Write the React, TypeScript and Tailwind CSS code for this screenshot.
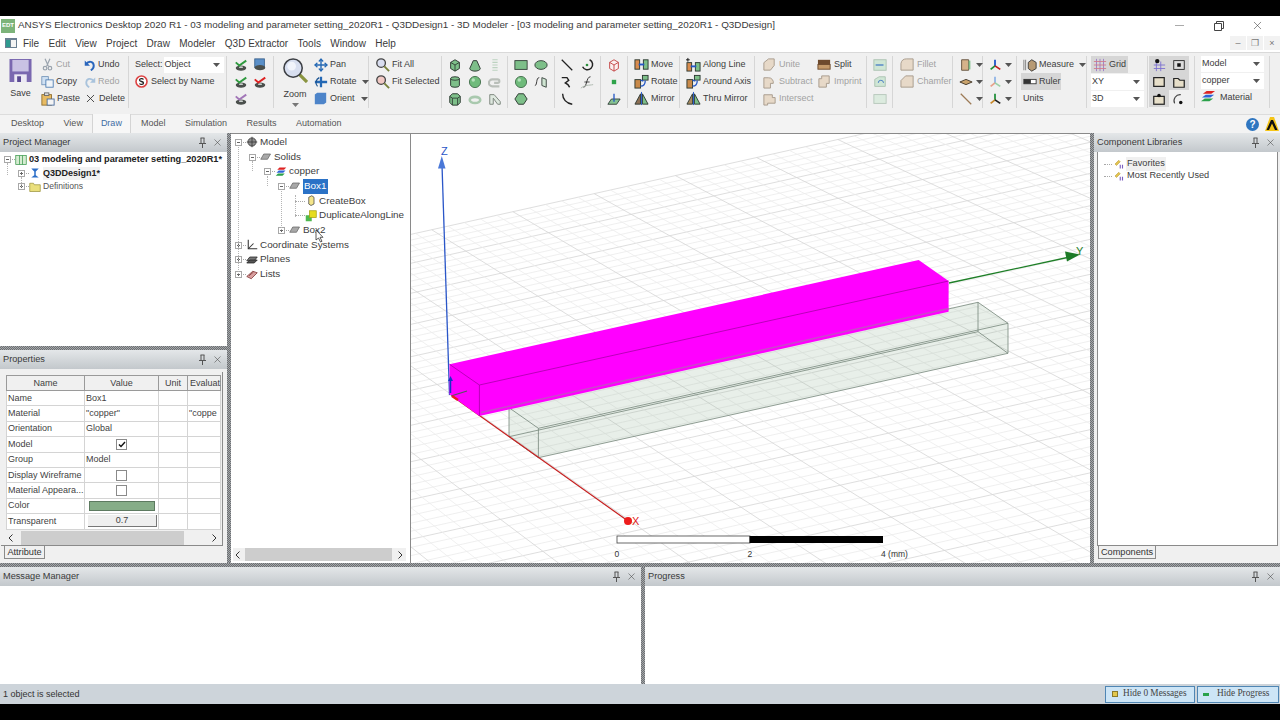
import React from 'react';
import { X, Move } from 'lucide-react';

const ink = '#2e3a33';

function Ic({ size = 14, children }: { size?: number; children?: React.ReactNode }) {
  return (
    <svg width={size} height={size} viewBox="0 0 16 16" fill="none" className="shrink-0">
      {children}
    </svg>
  );
}

function Caret({ color = '#555' }: { color?: string }) {
  return (
    <svg width="7" height="4" viewBox="0 0 7 4" className="shrink-0">
      <path d="M0 0h7L3.5 4z" fill={color} />
    </svg>
  );
}

function Pin() {
  return (
    <svg width="9" height="11" viewBox="0 0 9 11" fill="none" stroke="#555" strokeWidth="1">
      <path d="M1 6.5h7M2.5 1h4M3 1v5.5M6 1v5.5M4.5 6.5V11" />
    </svg>
  );
}

function PanelHeader({ title }: { title: string }) {
  return (
    <div className="h-[19px] shrink-0 flex items-center justify-between pl-[3px] pr-[4.500px] bg-gradient-to-b from-[#e4e7e9] to-[#c3c8cc] text-[9.2px] text-[#3a3a3a]">
      <span>{title}</span>
      <span className="flex items-center gap-[5px]">
        <Pin />
        <X size={11} strokeWidth={1.2} color="#444" />
      </span>
    </div>
  );
}

function Row({ icon, label, off, caret, className = '' }: { icon?: React.ReactNode; label: string; off?: boolean; caret?: boolean; className?: string }) {
  return (
    <div className={`h-[17px] flex items-center gap-[2px] whitespace-nowrap text-[9px] ${off ? 'text-[#a2a2a2]' : 'text-[#3c3c3c]'} ${className}`}>
      {icon}
      <span>{label}</span>
      {caret && <span className="ml-[3px]"><Caret /></span>}
    </div>
  );
}

function Col({ children, className = '' }: { children?: React.ReactNode; className?: string }) {
  return <div className={`flex flex-col shrink-0 ${className}`}>{children}</div>;
}

function Cell({ children, caret }: { children?: React.ReactNode; caret?: boolean }) {
  return (
    <div className="h-[17px] flex items-center justify-center gap-[3px]">
      {children}
      {caret && <Caret />}
    </div>
  );
}

function Combo({ label, className = '' }: { label: string; className?: string }) {
  return (
    <div className={`h-[16px] bg-white flex items-center justify-between pl-[1px] pr-[4px] text-[9px] text-[#3c3c3c] ${className}`}>
      <span>{label}</span>
      <Caret />
    </div>
  );
}

// ---- ribbon drawings
const Mark = ({ tint }: { tint: string }) => (
  <Ic>
    <ellipse cx="8" cy="11.5" rx="6" ry="3" fill="#4a4f4c" />
    <ellipse cx="8" cy="10.5" rx="2.4" ry="1" fill="#c9cfcb" />
    <path d="M2 5l4 3.5L14 3" stroke={tint} strokeWidth="2.2" />
  </Ic>
);
const Solid = ({ d, extra, pale }: { d: string; extra?: string; pale?: boolean }) => (
  <Ic>
    <path d={d} fill={pale ? '#dfe9e0' : '#7dbf89'} stroke={pale ? '#7d867e' : ink} strokeWidth="1.1" />
    {extra && <path d={extra} stroke={pale ? '#a9b5aa' : ink} strokeWidth="1" />}
  </Ic>
);
const Ball = () => (
  <Ic>
    <circle cx="8" cy="8" r="6.4" fill="#6fbb7b" stroke="#3f6b48" />
    <circle cx="6" cy="5.8" r="2" fill="#b4e0ba" />
  </Ic>
);
const Xf = ({ tint = '#c98a4a', arrow = '#2457c5' }: { tint?: string; arrow?: string }) => (
  <Ic size={15}>
    <rect x="1" y="6" width="6" height="9" fill={tint} stroke={ink} />
    <rect x="9" y="1.5" width="6" height="5" fill="#7dbf89" stroke={ink} />
    <path d="M7 6.5l3 1" stroke={arrow} strokeWidth="1.6" />
    <path d="M12 7c0 4-2 6-5 6" stroke={arrow} strokeWidth="1.4" />
  </Ic>
);
const Tri = ({ tint = '#8d6f54' }: { tint?: string }) => (
  <Ic size={15}>
    <path d="M7 3L1 14h6z" fill={tint} stroke={ink} />
    <path d="M9 3l6 11H9z" fill="#7dbf89" stroke={ink} />
    <path d="M8 1v14" stroke="#2457c5" />
  </Ic>
);
const Bool = ({ d }: { d: string }) => (
  <Ic size={15}>
    <path d={d} fill="#e7d9c8" stroke="#a89b8c" />
  </Ic>
);
const Lens = ({ tint }: { tint: string }) => (
  <Ic size={15}>
    <circle cx="6.5" cy="6.5" r="4.6" fill={tint} stroke="#444" strokeWidth="1.4" />
    <path d="M10 10l5 5" stroke="#77803a" strokeWidth="2" />
  </Ic>
);
const Axes = ({ a = '#1f8f3a', b = '#1a50c8', c = '#c02020' }: { a?: string; b?: string; c?: string }) => (
  <Ic>
    <path d="M8 2v8" stroke={b} strokeWidth="2" />
    <path d="M8 9l-5 4" stroke={a} strokeWidth="2" />
    <path d="M8 9l6 4" stroke={c} strokeWidth="2" />
  </Ic>
);

function Ribbon() {
  const g = 'flex shrink-0 border-r border-[#d6d6d6] h-[52px]';
  return (
    <div className="h-[62px] shrink-0 flex pt-[3px] bg-[#f0f0f0] border-t border-[#d9d9d9]">
      {/* clipboard */}
      <div className={`${g} w-[129px]`}>
        <Col className="w-[41px] items-center pt-[3px]">
          <svg width="23" height="23" viewBox="0 0 23 24">
            <path d="M0 0h23v24H0z" fill="#7a68b0" />
            <path d="M3 1h17v12H3z" fill="#c9c2e4" />
            <path d="M5 16h13v8H5z" fill="#ece9f4" />
            <path d="M8 18h4v6H8z" fill="#5b4a94" />
          </svg>
          <span className="text-[9px] text-[#3c3c3c] mt-[5px]">Save</span>
        </Col>
        <Col className="w-[43px]">
          <Row off label="Cut" icon={<Ic size={13}><path d="M5 1l4 9M11 1L7 10" stroke="#9aa3ad" strokeWidth="1.5" /><circle cx="5" cy="12.5" r="2.2" stroke="#9aa3ad" strokeWidth="1.5" /><circle cx="11" cy="12.5" r="2.2" stroke="#9aa3ad" strokeWidth="1.5" /></Ic>} />
          <Row label="Copy" icon={<Ic size={13}><rect x="1" y="2" width="8" height="10" fill="#cfe0f2" stroke="#6d8fb5" /><rect x="6" y="6" width="9" height="9" fill="#f0f4f8" stroke="#3f73ad" /></Ic>} />
          <Row label="Paste" icon={<Ic size={14}><rect x="1" y="3" width="11" height="12" fill="#e8bb62" stroke="#8e6c2c" /><rect x="4" y="1" width="5" height="3" fill="#ddd" stroke="#666" /><rect x="7" y="8" width="8" height="7" fill="#f4f4f4" stroke="#46699a" /></Ic>} />
        </Col>
        <Col>
          <Row label="Undo" icon={<Ic size={12}><path d="M3 7c3-5 10-4 10 2 0 3-2 5-4 6" stroke="#2a66bd" strokeWidth="2.6" /><path d="M1 2v7h7z" fill="#2a66bd" /></Ic>} />
          <Row off label="Redo" icon={<Ic size={12}><path d="M13 7C10 2 3 3 3 9c0 3 2 5 4 6" stroke="#a9c3dc" strokeWidth="2.4" /><path d="M15 2v7H8z" fill="#a9c3dc" /></Ic>} />
          <Row label="Delete" className="gap-[1px]" icon={<X size={13} strokeWidth={1.6} color="#333" className="shrink-0" />} />
        </Col>
      </div>
      {/* select */}
      <div className={`${g} w-[98px] pl-[6px]`}>
        <Col>
          <div className="h-[17px] flex items-center gap-[1px] text-[9px] text-[#3c3c3c]">
            <span>Select:</span>
            <Combo label="Object" className="w-[60px]" />
          </div>
          <Row label="Select by Name" className="gap-[3px]" icon={<svg width="13" height="13" viewBox="0 0 13 13"><circle cx="6.5" cy="6.5" r="5.5" fill="#fff" stroke="#d44" strokeWidth="1.6" /><path d="M8.5 4.5C7.5 3 4.5 3.4 4.5 5c0 2 4 1 4 3 0 1.600-3 2-4 .5" fill="none" stroke="#222" strokeWidth="1.3" /></svg>} />
        </Col>
      </div>
      {/* selection filters */}
      <div className={`${g} w-[47px] pl-[3px]`}>
        <Col className="w-[20px] ml-[1px]">
          <Cell><Mark tint="#2f9a3f" /></Cell>
          <Cell><Mark tint="#2f9a3f" /></Cell>
          <Cell><Mark tint="#a277b8" /></Cell>
        </Col>
        <Col className="w-[18px]">
          <Cell><Ic><rect x="2" y="1" width="11" height="10" fill="#5a8fc8" stroke="#39618d" /><ellipse cx="8" cy="11" rx="6" ry="3" fill="#4a4f4c" /></Ic></Cell>
          <Cell><Mark tint="#d22" /></Cell>
        </Col>
      </div>
      {/* view */}
      <div className={`${g} w-[95px]`}>
        <Col className="w-[40px] items-center pl-[2px]">
          <svg width="25" height="25" viewBox="0 0 26 26" className="mt-[2px]">
            <path d="M16 16l9 9" stroke="#8a9440" strokeWidth="3.4" />
            <circle cx="10.500" cy="10.500" r="9.500" fill="#d8dff0" stroke="#3c3f44" strokeWidth="1.6" />
            <circle cx="9" cy="8.500" r="4.500" fill="#f1f4fb" />
          </svg>
          <span className="text-[9px] text-[#3c3c3c] mt-[5px] leading-[12px]">Zoom</span>
          <span className="mt-[3px]"><Caret color="#777" /></span>
        </Col>
        <Col>
          <Row label="Pan" icon={<Move size={14} strokeWidth={2.4} color="#2468b4" className="shrink-0" />} />
          <Row label="Rotate" caret icon={<Ic><path d="M1 8h14M8 2v12" stroke="#2468b4" strokeWidth="2.6" /><path d="M4 13c-3-3-2-8 2-10" stroke="#1b5391" strokeWidth="1.4" /></Ic>} />
          <Row label="Orient" caret className="gap-[3px]" icon={<Ic size={13}><path d="M1 3l3-2h11v12l-3 2H1z" fill="#4d84c9" /></Ic>} />
        </Col>
      </div>
      <div className={`${g} w-[73px] pl-[6px]`}>
        <Col>
          <Row label="Fit All" icon={<Lens tint="#d9def0" />} />
          <Row label="Fit Selected" icon={<Lens tint="#f1c9c4" />} />
        </Col>
      </div>
      {/* 3D primitives */}
      <div className={`${g} w-[66px] pl-[3px]`}>
        <Col className="w-[20px]">
          <Cell><Solid d="M3 5l5-3 5 3v7l-5 3-5-3z" extra="M3 5l5 3 5-3M8 8v7" /></Cell>
          <Cell><Solid d="M3 4a5 2 0 0110 0v8a5 2 0 01-10 0z" extra="M3 4a5 2 0 0010 0" /></Cell>
          <Cell><Solid d="M2 5l3-3h6l3 3v7l-3 3H5l-3-3z" extra="M2 5l3 2h6l3-2M5 7v8M11 7v8" /></Cell>
        </Col>
        <Col className="w-[20px]">
          <Cell><Solid d="M6 3h4l4 9a6 3 0 01-12 0z" /></Cell>
          <Cell><Ball /></Cell>
          <Cell><Ic><ellipse cx="8" cy="9" rx="6" ry="3.500" stroke="#a9c9ae" strokeWidth="3" /></Ic></Cell>
        </Col>
        <Col className="w-[20px]">
          <Cell><Ic><path d="M5 2h6M5 5h6M5 8h6M5 11h6M5 14h6" stroke="#bcd2c0" strokeWidth="1.400" /></Ic></Cell>
          <Cell><Ic><path d="M13 13H5a4 4 0 010-8h6a2 2 0 010 4H7" stroke="#b9bfb9" strokeWidth="2.4" /></Ic></Cell>
          <Cell><Solid d="M2 3h5l7 8v3h-3L6 7v7H2z" pale /></Cell>
        </Col>
      </div>
      <div className={`${g} w-[47px] pl-[3px]`}>
        <Col className="w-[20px]">
          <Cell><Ic><rect x="1" y="3" width="14" height="10" fill="#7dbf89" stroke={ink} /></Ic></Cell>
          <Cell><Ball /></Cell>
          <Cell><Solid d="M5 2h6l4 6-4 6H5L1 8z" /></Cell>
        </Col>
        <Col className="w-[20px]">
          <Cell><Ic><ellipse cx="8" cy="8" rx="7" ry="5" fill="#7dbf89" stroke={ink} /></Ic></Cell>
          <Cell><Ic><path d="M1 12c3 0 1-9 5-9" stroke="#222" /><path d="M9 3l5 2v9l-5-2z" fill="#cfe5d2" stroke={ink} /></Ic></Cell>
        </Col>
      </div>
      <div className={`${g} w-[46px] pl-[2px]`}>
        <Col className="w-[20px]">
          <Cell><Ic><path d="M2 2l12 12" stroke="#222" strokeWidth="1.5" /></Ic></Cell>
          <Cell><Ic><path d="M2 3h6l2 3-4 3 3 2 2 3" stroke="#222" strokeWidth="1.6" /></Ic></Cell>
          <Cell><Ic><path d="M3 2c0 6 4 11 11 12" stroke="#222" strokeWidth="1.6" /></Ic></Cell>
        </Col>
        <Col className="w-[20px]">
          <Cell><Ic><path d="M11 2a6 6 0 11-8 8" stroke="#222" strokeWidth="1.700" /><circle cx="8" cy="8" r="1.500" fill="#2c8f3e" /></Ic></Cell>
          <Cell><Ic><path d="M4 14c4 0 3-12 8-12" stroke="#333" strokeWidth="1.100" /><path d="M5 8h6" stroke="#333" /><path d="M1 15c5-4 9-3 14-4" stroke="#a8b4a9" /></Ic></Cell>
        </Col>
      </div>
      <div className={`${g} w-[27px] justify-center`}>
        <Col>
          <Cell><Ic><path d="M3 5l5-3 5 3v7l-5 3-5-3z" fill="#fbeeee" stroke="#c03a3a" /><path d="M3 5l5 3 5-3M8 8v7" stroke="#c03a3a" /></Ic></Cell>
          <Cell><Ic><rect x="5.500" y="5.500" width="5" height="5" fill="#2fa34a" /></Ic></Cell>
          <Cell><Ic><path d="M1 14l4-6h10l-4 6z" fill="#85c292" stroke={ink} /><path d="M8 11V2" stroke="#2457c5" strokeWidth="1.500" /></Ic></Cell>
        </Col>
      </div>
      {/* duplicate and transforms */}
      <div className={`${g} w-[52px] pl-[6px]`}>
        <Col>
          <Row label="Move" icon={<Ic size={15}><rect x="1" y="3" width="5" height="10" fill="#d98c4e" stroke={ink} /><rect x="10" y="3" width="5" height="10" fill="#7dbf89" stroke={ink} /><path d="M5 8h6" stroke="#2457c5" strokeWidth="2" /></Ic>} />
          <Row label="Rotate" icon={<Xf />} />
          <Row label="Mirror" icon={<Tri />} />
        </Col>
      </div>
      <div className={`${g} w-[75px] pl-[6px]`}>
        <Col>
          <Row label="Along Line" icon={<Ic size={15}><rect x="1" y="6" width="5" height="9" fill="#d98c4e" stroke={ink} /><rect x="10" y="6" width="5" height="9" fill="#7dbf89" stroke={ink} /><path d="M5 10h6" stroke="#2457c5" strokeWidth="2" /><path d="M2 1v4M0 3h4" stroke="#111" /></Ic>} />
          <Row label="Around Axis" icon={<Xf />} />
          <Row label="Thru Mirror" icon={<Tri tint="#a88a5f" />} />
        </Col>
      </div>
      <div className={`${g} w-[112px] pl-[7px]`}>
        <Col className="w-[55px]">
          <Row off label="Unite" className="gap-[1px]" icon={<Bool d="M2 6l5-4h6v7l-4 5H2z" />} />
          <Row off label="Subtract" className="gap-[1px]" icon={<Bool d="M2 4h5a5 5 0 015 6H9v5H2z" />} />
          <Row off label="Intersect" className="gap-[1px]" icon={<Bool d="M2 4h9v3h3v6H6v2H2z" />} />
        </Col>
        <Col>
          <Row label="Split" icon={<Ic size={15}><rect x="1" y="3" width="13" height="5" fill="#6e4a2d" /><rect x="1" y="8" width="13" height="5" fill="#c59a6a" stroke="#6e4a2d" /></Ic>} />
          <Row off label="Imprint" icon={<Bool d="M2 5h3V2h8v8h-3v4H2z" />} />
        </Col>
      </div>
      <div className={`${g} w-[26px] justify-center`}>
        <Col>
          <Cell><Ic><rect x="1" y="2" width="14" height="12" fill="#cfe6d5" stroke="#a8c0ae" /><path d="M3 8h9" stroke="#3f76c4" strokeWidth="1.400" /></Ic></Cell>
          <Cell><Ic><path d="M2 13V5l5-3h7v11z" fill="#cfe6d5" stroke="#a8c0ae" /><path d="M6 9a3 3 0 016 0" stroke="#3f76c4" /></Ic></Cell>
          <Cell><Ic><rect x="1" y="3" width="14" height="10" fill="#dcebdf" stroke="#b4c4b8" /></Ic></Cell>
        </Col>
      </div>
      <div className={`${g} w-[60px] pl-[7px]`}>
        <Col>
          <Row off label="Fillet" icon={<Bool d="M1 14V7a6 6 0 016-5h7v12z" />} />
          <Row off label="Chamfer" icon={<Bool d="M1 14V7l5-5h8v12z" />} />
        </Col>
      </div>
      <div className={`${g} w-[30px] pl-[6px]`}>
        <Col>
          <Cell caret><Ic><path d="M3 2h8v12H3z" fill="#d5b28a" stroke="#5b4a36" /><path d="M12 3v10" stroke="#7dbf89" strokeWidth="2" /></Ic></Cell>
          <Cell caret><Ic><path d="M1 8l7-3 7 3-7 3z" fill="#c9a36c" stroke="#3c3124" /></Ic></Cell>
          <Cell caret><Ic><path d="M2 2l12 12" stroke="#9c7a55" strokeWidth="1.500" /></Ic></Cell>
        </Col>
      </div>
      <div className={`${g} w-[34px] pl-[5px]`}>
        <Col>
          <Cell caret><Axes /></Cell>
          <Cell caret><Axes a="#e8a08a" b="#8db3e6" c="#9ad0a5" /></Cell>
          <Cell caret><Axes a="#c98a2c" b="#1f8f3a" c="#222" /></Cell>
        </Col>
      </div>
      {/* measure and grid */}
      <div className={`${g} w-[70px] pl-[4px]`}>
        <Col>
          <Row label="Measure" caret className="pl-[2px]" icon={<Ic size={14}><path d="M1 2v12M3 2v12" stroke="#777" /><path d="M6 5l4-3 5 3v7l-5 3-4-3z" fill="#b79a74" stroke="#333" /></Ic>} />
          <Row label="Ruler" className="bg-[#d6d6d6] w-[40px] pl-[2px]" icon={<Ic size={14}><rect x="1" y="5" width="14" height="5" fill="#fff" stroke="#333" /><rect x="1" y="5" width="8" height="5" fill="#333" /></Ic>} />
          <Row label="Units" className="pl-[2px]" />
        </Col>
      </div>
      <div className={`${g} w-[61px] pl-[4px]`}>
        <Col>
          <Row label="Grid" className="bg-[#d6d6d6] w-[37px] pl-[2px]" icon={<Ic size={14}><path d="M4 1v14M8 1v14M12 1v14" stroke="#9a78c8" /><path d="M1 4h14M1 8h14M1 12h14" stroke="#d07a8a" /></Ic>} />
          <Combo label="XY" className="w-[53px] mt-[1px]" />
          <Combo label="3D" className="w-[53px] mt-[1px]" />
        </Col>
      </div>
      <div className={`${g} w-[47px] pl-[1px]`}>
        <div className="grid grid-cols-[20px_20px] grid-rows-[17px_17px_17px]">
          <div className="bg-[#d6d6d6] flex items-center justify-center"><Ic><path d="M5 4v11M10 4v11M2 8h13M2 12h13" stroke="#7a6fd0" /><circle cx="6" cy="3.500" r="2.500" fill="#111" /></Ic></div>
          <div className="bg-[#d6d6d6] flex items-center justify-center"><Ic><rect x="2" y="3" width="12" height="10" fill="#ddd" stroke="#222" /><rect x="6" y="6" width="4" height="4" fill="#111" /></Ic></div>
          <div className="bg-[#d6d6d6] flex items-center justify-center"><Ic><rect x="2" y="3" width="12" height="10" fill="#e7dfc9" stroke="#222" strokeWidth="1.400" /></Ic></div>
          <div className="bg-[#d6d6d6] flex items-center justify-center"><Ic><path d="M2 4h5l2 2h5v8H2z" fill="#e7dfc9" stroke="#222" strokeWidth="1.400" /></Ic></div>
          <div className="bg-[#d6d6d6] flex items-center justify-center"><Ic><rect x="2" y="5" width="12" height="9" fill="#e7dfc9" stroke="#222" strokeWidth="1.400" /><circle cx="8" cy="4" r="2" fill="#111" /></Ic></div>
          <div className="flex items-center justify-center"><Ic><path d="M3 13A7 7 0 0110 3" stroke="#444" strokeWidth="1.300" /><circle cx="10" cy="12" r="2" fill="#111" /></Ic></div>
        </div>
      </div>
      <div className={`${g} w-[75px] pl-[6px]`}>
        <Col>
          <Combo label="Model" className="w-[63px]" />
          <Combo label="copper" className="w-[63px] mt-[1px]" />
          <Row label="Material" className="gap-[4px]" icon={<Ic size={15}><path d="M2 4l4-3h9l-4 3z" fill="#d22" /><path d="M1 8l4-3h9l-4 3z" fill="#2d62d8" /><path d="M0 12l4-3h9l-4 3z" fill="#2aa14a" /></Ic>} />
        </Col>
      </div>
    </div>
  );
}

function Expander({ open }: { open?: boolean }) {
  return (
    <span className="w-[9px] h-[9px] shrink-0 flex items-center justify-center">
      <svg width="7" height="7" viewBox="0 0 7 7">
        <rect x=".5" y=".5" width="6" height="6" fill="#fff" stroke="#a8a8a8" />
        <path d={open ? 'M2 3.500h3' : 'M2 3.500h3M3.500 2v3'} stroke="#666" />
      </svg>
    </span>
  );
}

const Dash = ({ className = 'w-[3px]' }: { className?: string }) => (
  <span className={`shrink-0 border-t border-dotted border-[#a8a8a8] ${className}`} />
);

const Guide = ({ className }: { className: string }) => (
  <span className={`absolute w-px border-l border-dotted border-[#b5b5b5] ${className}`} />
);

const Slab = () => <Ic size={12}><path d="M1 11l4-7h9l-4 7z" fill="#a8a8a8" stroke="#666" /></Ic>;

function TreeRow({ pad, open, icon, label, selected }: { pad: string; open?: boolean; icon: React.ReactNode; label: string; selected?: boolean }) {
  return (
    <div className={`h-[14.7px] flex items-center whitespace-nowrap ${pad}`}>
      <Expander open={open} />
      <Dash />
      {icon}
      <span className={`ml-[2px] ${selected ? 'bg-[#2b72c6] text-white px-[1px]' : ''}`}>{label}</span>
    </div>
  );
}

function Leaf({ icon, label }: { icon: React.ReactNode; label: string }) {
  return (
    <div className="h-[14.7px] flex items-center whitespace-nowrap pl-[64px]">
      <Dash className="w-[10px]" />
      {icon}
      <span className="ml-[2px]">{label}</span>
    </div>
  );
}

function ModelTree() {
  return (
    <div className="relative w-[180px] shrink-0 bg-white border-r border-t border-[#8a8a8a] flex flex-col text-[9.9px] text-[#404040]">
      {/* dotted tree guides */}
      <Guide className="left-[7px] top-[13px] h-[127px]" />
      <Guide className="left-[21px] top-[27px] h-[10px]" />
      <Guide className="left-[36px] top-[42px] h-[10px]" />
      <Guide className="left-[50px] top-[57px] h-[39px]" />
      <Guide className="left-[64px] top-[61px] h-[22px]" />
      <div className="flex-1 pt-[1px] overflow-hidden">
        <TreeRow pad="pl-[3px]" open label="Model" icon={<Ic size={12}><circle cx="8" cy="8" r="5.500" fill="#8b8b8b" stroke="#333" /><path d="M8 1v14M1 8h14" stroke="#333" /></Ic>} />
        <TreeRow pad="pl-[17px]" open label="Solids" icon={<Slab />} />
        <TreeRow pad="pl-[32px]" open label="copper" icon={<Ic size={12}><path d="M3 5l3-3h9l-3 3z" fill="#d22" /><path d="M2 9l3-3h9l-3 3z" fill="#2d62d8" /><path d="M1 13l3-3h9l-3 3z" fill="#2aa14a" /></Ic>} />
        <TreeRow pad="pl-[46px]" open selected label="Box1" icon={<Slab />} />
        <Leaf label="CreateBox" icon={<Ic size={12}><path d="M5 3l4-2 3 2v9l-4 2-3-2z" fill="#f4e58a" stroke="#444" /></Ic>} />
        <Leaf label="DuplicateAlongLine" icon={<Ic size={12}><rect x="1" y="7" width="8" height="8" fill="#4db84e" /><rect x="6" y="1" width="9" height="9" fill="#e6dc1c" stroke="#a8a010" /></Ic>} />
        <TreeRow pad="pl-[46px]" label="Box2" icon={<Slab />} />
        <TreeRow pad="pl-[3px]" label="Coordinate Systems" icon={<Ic size={12}><path d="M3 1v12h12" stroke="#333" strokeWidth="1.400" /><path d="M3 13l7-7" stroke="#333" strokeWidth="1.400" /></Ic>} />
        <TreeRow pad="pl-[3px]" label="Planes" icon={<Ic size={12}><path d="M1 9l4-5h10l-4 5z" fill="#777" stroke="#222" /><path d="M1 12l4-4h10l-4 4z" fill="#555" stroke="#222" /></Ic>} />
        <TreeRow pad="pl-[3px]" label="Lists" icon={<Ic size={12}><path d="M1 10l8-7 6 2-8 8z" fill="#d9a0a0" stroke="#7a2f2f" /><path d="M4 9l6-5" stroke="#7a2f2f" /></Ic>} />
      </div>
      {/* cursor over the Box2 row */}
      <svg width="10" height="14" viewBox="0 0 10 14" className="absolute left-[84px] top-[95px]">
        <path d="M1 1v10l2.500-2 2 4 1.500-.7-2-4H8z" fill="#fff" stroke="#333" strokeWidth=".8" />
      </svg>
      <Scroller className="h-[13px] ml-[2px] mr-[4px] mb-[2px]" left="ml-[5px]" thumb="w-[147px]" />
    </div>
  );
}

function Scroller({ className, left, thumb }: { className: string; left: string; thumb: string }) {
  return (
    <div className={`shrink-0 flex items-center justify-between bg-[#f0f0f0] text-[#333] ${className}`}>
      <svg width="5" height="8" viewBox="0 0 5 8" fill="none" stroke="#333" className="ml-[2px] shrink-0"><path d="M4.500 .5L1 4l3.500 3.500" /></svg>
      <div className={`h-full bg-[#cdcdcd] ${left} ${thumb}`} />
      <span className="flex-1" />
      <svg width="5" height="8" viewBox="0 0 5 8" fill="none" stroke="#333" className="mr-[3px] shrink-0"><path d="M.5 .5L4 4 .5 7.500" /></svg>
    </div>
  );
}

function Check({ on }: { on?: boolean }) {
  return (
    <div className="w-[11px] h-[11px] ml-[30px] bg-white border border-[#8a8a8a] flex items-center justify-center">
      {on && <svg width="8" height="7" viewBox="0 0 8 7" fill="none" stroke="#111" strokeWidth="1.400"><path d="M1 3.500l2 2L7 1" /></svg>}
    </div>
  );
}

function Properties() {
  const rows: [string, React.ReactNode, string?][] = [
    ['Name', 'Box1'],
    ['Material', '"copper"', '"coppe'],
    ['Orientation', 'Global'],
    ['Model', <Check on />],
    ['Group', 'Model'],
    ['Display Wireframe', <Check />],
    ['Material Appeara...', <Check />],
    ['Color', <div className="h-[10px] mx-[3px] bg-[#86ad88] border border-[#5d7a60]" />],
    ['Transparent', <div className="h-[12px] ml-[2px] mr-[1px] bg-[#efefef] border-r border-b border-[#777] text-center leading-[11px]">0.7</div>],
  ];
  return (
    <div className="flex-1 bg-[#f0f0f0] flex flex-col min-h-0">
      <PanelHeader title="Properties" />
      <div className="mt-[3px] ml-[1px] mr-[4px] h-[174px] shrink-0 border-r border-b border-[#8a8a8a] pl-[5px] pt-[3px]">
        <table className="table-fixed w-[214px] border-collapse text-[9px] leading-[11px] text-[#3f3f3f] bg-white">
          <thead>
            <tr className="h-[15px]">
              <th className="w-[78px] p-0 font-normal bg-[#f0f0f0] border border-[#9a9a9a]">Name</th>
              <th className="w-[74px] p-0 font-normal bg-[#f0f0f0] border border-[#9a9a9a]">Value</th>
              <th className="w-[29px] p-0 font-normal bg-[#f0f0f0] border border-[#9a9a9a]">Unit</th>
              <th className="w-[33px] p-0 font-normal bg-[#f0f0f0] border border-[#9a9a9a] whitespace-nowrap text-left pl-[2px]">Evaluat</th>
            </tr>
          </thead>
          <tbody>
            {rows.map(([name, value, evaluated]) => (
              <tr key={name} className="h-[15.4px]">
                <td className="border border-[#d4d4d4] pl-[1px] whitespace-nowrap">{name}</td>
                <td className="border border-[#d4d4d4] pl-[1px]">{value}</td>
                <td className="border border-[#d4d4d4]" />
                <td className="border border-[#d4d4d4] pl-[1px] whitespace-nowrap">{evaluated}</td>
              </tr>
            ))}
          </tbody>
        </table>
        <Scroller className="h-[14px] w-[214px] mt-[1px]" left="ml-[8px]" thumb="w-[163px]" />
      </div>
      <PanelTab label="Attribute" className="ml-[4px] w-[41px]" />
    </div>
  );
}

function PanelTab({ label, className }: { label: string; className: string }) {
  return (
    <div className={`h-[13px] bg-[#f0f0f0] border-x border-b border-[#8a8a8a] text-[9.2px] leading-[13px] text-center text-[#333] ${className}`}>
      {label}
    </div>
  );
}

const Gutter = ({ className }: { className: string }) => (
  <div className={`shrink-0 bg-[repeating-conic-gradient(#6c6f72_0_25%,#a4a7aa_0_50%)] bg-[length:2px_2px] ${className}`} />
);

function Scene() {
  const project = (u: number, v: number) => {
    const w = 1 - 0.004 * u;
    return [452 + (u * 7.5 + v * 18) / w, 395 + (u * 5.3 - v * 4) / w];
  };
  const lines: React.ReactNode[] = [];
  for (let u = -27; u <= 72; u++) {
    const [x1, y1] = project(u, -40);
    const [x2, y2] = project(u, 60);
    lines.push(<line key={`u${u}`} x1={x1} y1={y1} x2={x2} y2={y2} stroke={(u + 27) % 5 === 0 ? '#d6d6d6' : '#ebebeb'} strokeWidth=".8" />);
  }
  for (let v = -40; v <= 60; v++) {
    const [x1, y1] = project(-27, v);
    const [x2, y2] = project(72, v);
    lines.push(<line key={`v${v}`} x1={x1} y1={y1} x2={x2} y2={y2} stroke={v % 5 === 0 ? '#d6d6d6' : '#ececec'} strokeWidth=".8" />);
  }
  const wire = '#75857a';
  return (
    <svg viewBox="411 133 679 430" className="block w-full h-full bg-white">
      {lines}
      <path d="M411 133.500H1090" stroke="#8a8a8a" />
      {/* ghost of Box2 */}
      <path d="M509 407.700L978 302.300 1008 323.300V353.300L538.400 457.700 509 436.700z" fill="#8cb08f" fillOpacity=".2" />
      <path d="M509 407.700L978 302.300 1008 323.300V353.300L538.400 457.700 509 436.700zM509 407.700L538.400 428.300 1008 323.300M538.400 428.300V457.700M978 302.300V331.700M509 436.700L978 331.700 1008 353.300" fill="none" stroke={wire} strokeWidth=".8" />
      {/* axes */}
      <path d="M449.500 395L442 165" stroke="#2a56c8" strokeWidth="1.300" />
      <path d="M441.800 156l3.700 12.500h-7.500z" fill="#4a78d8" />
      <path d="M949 283L1072 256.500" stroke="#1f7f28" strokeWidth="1.300" />
      <path d="M1080 254.500l-13 7-2-10z" fill="#1d7a26" />
      <path d="M452 396L628 521" stroke="#c62020" strokeWidth="1.200" />
      <circle cx="628" cy="521" r="4" fill="#ee1c1c" />
      <text x="632" y="525" fontSize="11" fill="#e01818" fontFamily="Liberation Sans, sans-serif">X</text>
      <text x="1076" y="255" fontSize="11" fill="#1f7f28" fontFamily="Liberation Sans, sans-serif">Y</text>
      <text x="441" y="155" fontSize="11" fill="#2a56c8" fontFamily="Liberation Sans, sans-serif">Z</text>
      {/* Box1 */}
      <path d="M449.500 364.300L918.700 260 948.600 281V311.700L479.400 416 449.500 394.300z" fill="#ff00ff" />
      <path d="M449.500 364.300L479.400 385 948.600 281M479.400 385V416" fill="none" stroke="#a800a8" strokeWidth=".8" />
      <path d="M481 412.500L948.600 308.500" stroke="#c84ac8" strokeWidth="1.500" />
      <path d="M450.500 393V379" stroke="#1a30c8" strokeWidth="1.500" />
      <path d="M450.500 376l2.500 5h-5z" fill="#1a30c8" />
      <path d="M451 396L467 391" stroke="#55555f" strokeWidth="1.200" />
      <path d="M452 396l6 4" stroke="#ee1c1c" strokeWidth="2.400" />
      {/* scale */}
      <rect x="617" y="536" width="133" height="7" fill="#fff" stroke="#444" strokeWidth=".8" />
      <rect x="749.500" y="536" width="133.500" height="7" fill="#000" />
      <g fontSize="8.500" fill="#333" fontFamily="Liberation Sans, sans-serif">
        <text x="614.500" y="557">0</text>
        <text x="747.500" y="557">2</text>
        <text x="881" y="557">4 (mm)</text>
      </g>
    </svg>
  );
}

function ComponentLibraries() {
  const Folder = () => (
    <Ic size={12}><path d="M4 8l5-5 2 2-5 5z" fill="#e4c34e" stroke="#a68a20" strokeWidth=".6" /><path d="M11 9v5M14 9v5" stroke="#7a5fc0" strokeWidth="1.500" /></Ic>
  );
  return (
    <div className="w-[186px] shrink-0 bg-[#f0f0f0] flex flex-col">
      <PanelHeader title="Component Libraries" />
      <div className="ml-[3px] mr-[2px] h-[394px] shrink-0 bg-white border-x border-b border-[#8a8a8a] pt-[6px] pl-[6px] text-[9.200px] text-[#404040]">
        <div className="h-[12px] flex items-center"><Dash className="w-[8px]" /><Folder /><span className="ml-[2px] bg-[#f0f0f0] px-[1px]">Favorites</span></div>
        <div className="h-[12px] flex items-center"><Dash className="w-[8px]" /><Folder /><span className="ml-[2px] px-[1px]">Most Recently Used</span></div>
      </div>
      <PanelTab label="Components" className="ml-[4px] w-[58px]" />
    </div>
  );
}

function StatusButton({ icon, label, className }: { icon: React.ReactNode; label: string; className: string }) {
  return (
    <div className={`h-[17px] flex items-center bg-[#cde5f6] border border-[#4f86b4] text-[9.300px] text-[#444] [font-family:'Liberation_Serif',serif] ${className}`}>
      {icon}
      <span>{label}</span>
    </div>
  );
}

export default function App() {
  const menu = ['File', 'Edit', 'View', 'Project', 'Draw', 'Modeler', 'Q3D Extractor', 'Tools', 'Window', 'Help'];
  const tabs = ['Desktop', 'View', 'Draw', 'Model', 'Simulation', 'Results', 'Automation'];
  return (
    <div className="w-[1280px] h-[720px] overflow-hidden bg-black flex flex-col py-[16px] [font-family:'Liberation_Sans',sans-serif]">
      <div className="h-[18px] shrink-0 pt-[1px] bg-white flex items-center text-[9.900px] text-[#3a3a3a]">
        <div className="w-[14px] h-[14px] ml-[1px] mr-[3px] bg-[#7db37a] text-white text-[6px] font-bold flex items-center justify-center">EDT</div>
        <span className="whitespace-nowrap">ANSYS Electronics Desktop 2020 R1 - 03 modeling and parameter setting_2020R1 - Q3DDesign1 - 3D Modeler - [03 modeling and parameter setting_2020R1 - Q3DDesign]</span>
        <div className="ml-auto flex items-center">
          <span className="w-[39px] flex justify-center"><span className="w-[9px] h-px bg-[#aaa]" /></span>
          <span className="w-[39px] flex justify-center"><svg width="10" height="10" viewBox="0 0 10 10" fill="none" stroke="#444"><path d="M.5 2.500h7v7h-7zM2.500 2.500v-2h7v7h-2" /></svg></span>
          <span className="w-[39px] flex justify-center"><X size={13} strokeWidth={1} color="#333" /></span>
          <span className="w-[3px]" />
        </div>
      </div>
      <div className="h-[18px] shrink-0 bg-white flex items-center text-[10px] text-[#3a3a3a]">
        <svg width="12" height="10" viewBox="0 0 12 10" className="ml-[5px] mr-[6px] shrink-0">
          <rect width="12" height="10" fill="#6b7f92" />
          <rect x="1" y="2" width="4" height="7" fill="#2f9a8f" />
          <rect x="6" y="2" width="5" height="7" fill="#f4f4f4" />
        </svg>
        <div className="flex gap-[9.400px] pt-[1px]">
          {menu.map((m) => <span key={m}>{m}</span>)}
        </div>
        <div className="ml-auto flex gap-[1px]">
          {['–', '❐', '×'].map((s) => (
            <span key={s} className="w-[16px] h-[14px] bg-[#f2f2f2] text-[9px] leading-[14px] text-center text-[#777]">{s}</span>
          ))}
        </div>
      </div>
      <Ribbon />
      <div className="h-[19px] shrink-0 bg-[#f3f3f3] flex items-stretch border-t border-[#dcdcdc] text-[9px] text-[#555] pl-[11px]">
        {tabs.map((t) =>
          t === 'Draw' ? (
            <span key={t} className="w-[39px] -ml-[10.500px] mr-[10px] -mt-[1px] bg-[#f7f7f7] border-x border-[#d4d4d4] flex items-center justify-center text-[#3f6ea5]">{t}</span>
          ) : (
            <span key={t} className="flex items-center mr-[19.500px]">{t}</span>
          ),
        )}
        <span className="ml-auto flex items-center gap-[6px] pr-[1px]">
          <svg width="13" height="13" viewBox="0 0 13 13"><circle cx="6.500" cy="6.500" r="6.500" fill="#2f76c0" /><text x="6.500" y="10" fontSize="10" fontWeight="700" textAnchor="middle" fill="#fff">?</text></svg>
          <svg width="14" height="14" viewBox="0 0 14 14"><path d="M0 14L5 0h4l5 14z" fill="#f5c518" /><path d="M1.500 13L6 3h2l4.500 10h-2.500L7 6.500 4 13z" fill="#111" /></svg>
        </span>
      </div>
      <div className="h-[430px] shrink-0 flex">
        <div className="w-[227px] shrink-0 flex flex-col">
          <div className="relative h-[213px] shrink-0 bg-white flex flex-col">
            <PanelHeader title="Project Manager" />
            <Guide className="left-[7px] top-[30px] h-[12px]" />
            <Guide className="left-[21px] top-[44px] h-[10px]" />
            <div className="pt-[1px] pl-[3px] text-[9px] text-[#222]">
              <div className="h-[13.500px] flex items-center whitespace-nowrap">
                <Expander open /><Dash /><Ic size={12}><rect x="1" y="2" width="14" height="12" fill="#d6ecd2" stroke="#3d9a4d" /><path d="M6 2v12M10 2v12" stroke="#3d9a4d" /></Ic>
                <span className="ml-[2px] font-bold text-[9.200px]">03 modeling and parameter setting_2020R1*</span>
              </div>
              <div className="h-[13.500px] flex items-center pl-[14px] whitespace-nowrap">
                <Expander /><Dash /><Ic size={12}><path d="M3 2h10L9 6v5l4 3H3l4-3V6z" fill="#2c6fc8" /></Ic>
                <span className="ml-[2px] font-bold bg-[#f2f2f2]">Q3DDesign1*</span>
              </div>
              <div className="h-[13.500px] flex items-center pl-[14px] whitespace-nowrap text-[8.600px] text-[#555]">
                <Expander /><Dash /><Ic size={12}><path d="M1 3h5l1 2h8v9H1z" fill="#eadf7c" stroke="#9c9440" /></Ic>
                <span className="ml-[2px]">Definitions</span>
              </div>
            </div>
          </div>
          <Gutter className="h-[4px]" />
          <Properties />
        </div>
        <Gutter className="w-[4px]" />
        <ModelTree />
        <div className="w-[679px] shrink-0"><Scene /></div>
        <Gutter className="w-[4px]" />
        <ComponentLibraries />
      </div>
      <Gutter className="h-[4px]" />
      <div className="h-[117px] shrink-0 flex">
        <div className="w-[641px] shrink-0 bg-white flex flex-col"><PanelHeader title="Message Manager" /></div>
        <Gutter className="w-[4px]" />
        <div className="flex-1 bg-white flex flex-col"><PanelHeader title="Progress" /></div>
      </div>
      <div className="h-[20px] shrink-0 bg-[#cdd4da] flex items-center text-[9px] text-[#333] pl-[3px]">
        <span className="pt-[1px]">1 object is selected</span>
        <div className="ml-auto flex gap-[2px] pr-[1px]">
          <StatusButton className="w-[90px] gap-[5px] pl-[6px]" label="Hide 0 Messages" icon={<span className="w-[6px] h-[6px] bg-[#e2c84e] border border-[#8a7a2a]" />} />
          <StatusButton className="w-[82px] gap-[8px] pl-[5px]" label="Hide Progress" icon={<span className="w-[6px] h-[3px] bg-[#2aa14a]" />} />
        </div>
      </div>
    </div>
  );
}
